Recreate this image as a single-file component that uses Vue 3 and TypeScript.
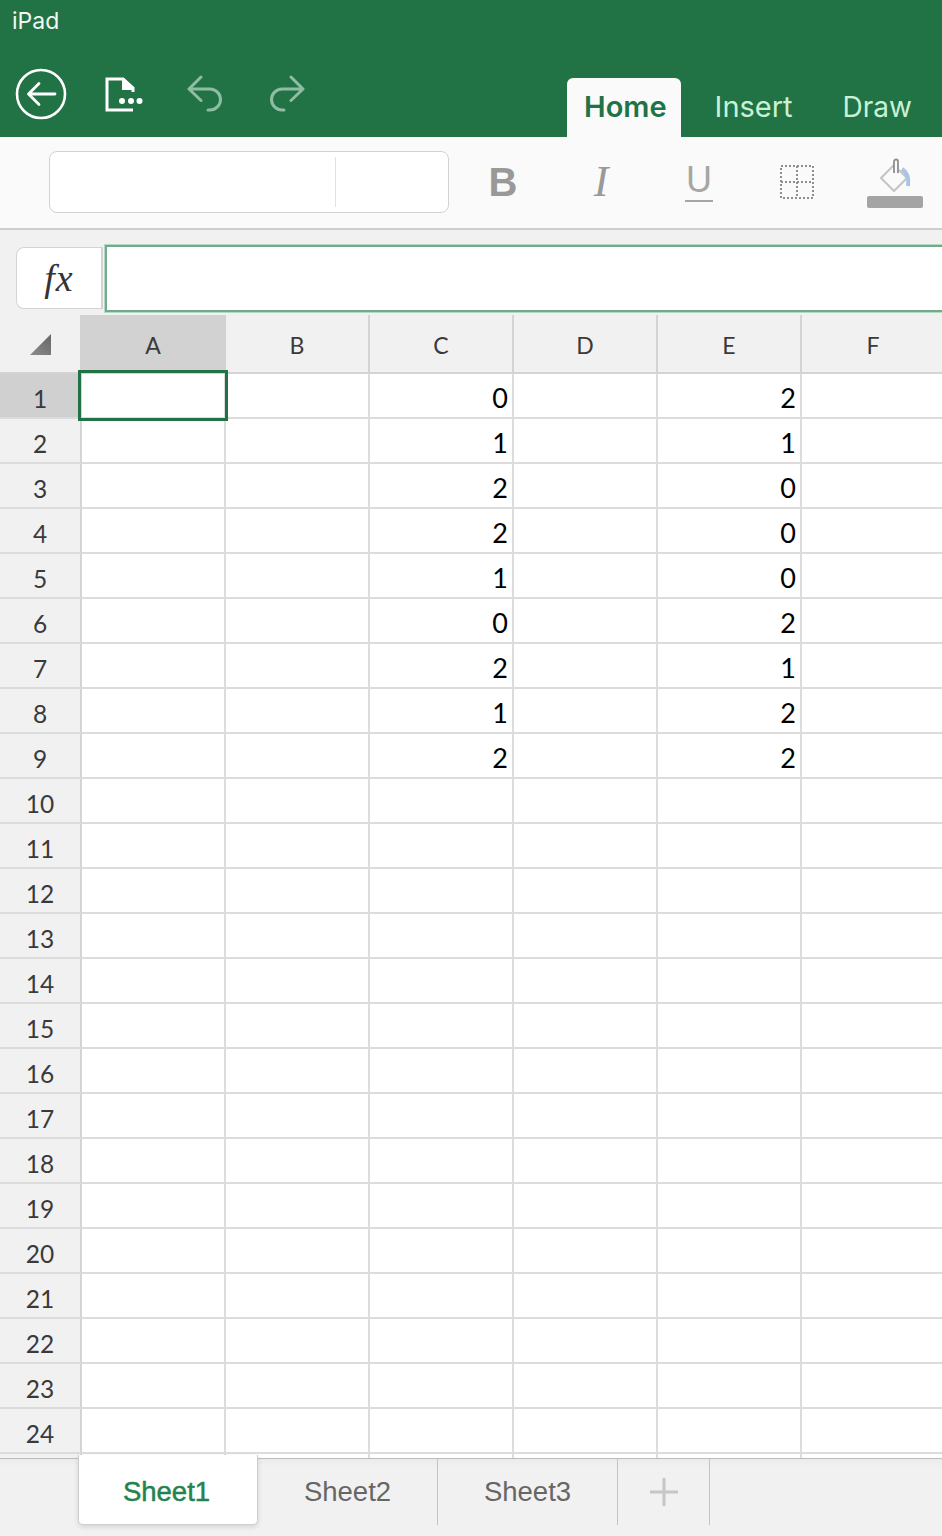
<script setup lang="ts">
const ribbonTabs = ['Home', 'Insert', 'Draw'];
const columns = ['A', 'B', 'C', 'D', 'E', 'F'];
const sheets = ['Sheet1', 'Sheet2', 'Sheet3'];

// values typed into columns C and E, top to bottom
const values: Record<string, number[]> = {
  C: [0, 1, 2, 2, 1, 0, 2, 1, 2],
  E: [2, 1, 0, 0, 0, 2, 1, 2, 2],
};

const rows = Array.from({ length: 24 }, (_, i) => i + 1);

function cellValue(col: string, row: number) {
  return values[col]?.[row - 1] ?? '';
}
</script>

<template>
  <div class="app">
    <header class="top">
      <div class="status">iPad</div>
      <div class="toolbar">
        <div class="actions">
          <svg class="icon-back" width="52" height="52" viewBox="0 0 52 52" fill="none">
            <circle cx="26" cy="26" r="24" stroke="#fff" stroke-width="2.6" />
            <path d="M40 26H14M24 15.5 13.5 26 24 36.5" stroke="#fff" stroke-width="2.8" stroke-linecap="round" stroke-linejoin="round" />
          </svg>
          <svg class="icon-file" width="40" height="36" viewBox="0 0 40 36" fill="none">
            <path d="M29 15V11L19 2H3V33H29" stroke="#fff" stroke-width="3" />
            <path d="M18 1h2l10 10v2H18z" fill="#fff" />
            <circle cx="18" cy="24" r="3" fill="#fff" />
            <circle cx="27" cy="24" r="3" fill="#fff" />
            <circle cx="35.500" cy="24" r="3" fill="#fff" />
          </svg>
          <svg class="icon-undo" width="38" height="38" viewBox="0 0 38 38" fill="none">
            <path d="M14 2 2 14l12 11.500M2 14h21a10.500 10.500 0 0 1 0 21h-2" stroke="#8fbda3" stroke-width="3" stroke-linecap="round" stroke-linejoin="round" />
          </svg>
          <svg class="icon-redo" width="38" height="38" viewBox="0 0 38 38" fill="none">
            <path d="M24 2l12 12-12 11.500M36 14H15a10.500 10.500 0 0 0 0 21h2" stroke="#8fbda3" stroke-width="3" stroke-linecap="round" stroke-linejoin="round" />
          </svg>
        </div>
        <nav class="tabs">
          <div v-for="(tab, i) in ribbonTabs" :key="tab" class="tab" :class="{ active: i === 0 }">{{ tab }}</div>
        </nav>
      </div>
    </header>

    <section class="ribbon">
      <div class="font-box">
        <div class="font-name"></div>
        <div class="font-size"></div>
      </div>
      <div class="tool bold">B</div>
      <div class="tool italic">I</div>
      <div class="tool underline"><span>U</span></div>
      <div class="tool">
        <svg width="36" height="36" viewBox="0 0 36 36" fill="none">
          <path d="M2 2H34V34H2ZM18 2V34M2 18H34" stroke="#8f8f8f" stroke-width="2" stroke-dasharray="2 2" />
        </svg>
      </div>
      <div class="tool fill">
        <svg width="34" height="36" viewBox="0 0 34 36" fill="none">
          <path d="M16 7 3 20l13 13 13-13-8-8" stroke="#c4c4c4" stroke-width="2" stroke-linejoin="round" />
          <path d="M16 15V3.500a2 2 0 0 1 4 0V15" stroke="#8e8e8e" stroke-width="1.800" />
          <path d="M24 11c5 3 7 9 6 17" stroke="#a9c5e6" stroke-width="4" />
        </svg>
        <div class="fill-bar"></div>
      </div>
    </section>

    <section class="formula">
      <div class="fx">fx</div>
      <div class="formula-input"></div>
    </section>

    <main class="sheet">
      <div class="row head">
        <div class="corner">
          <svg width="22" height="22" viewBox="0 0 22 22">
            <defs>
              <linearGradient id="cornerFill" x1="0" y1="1" x2="1" y2="0">
                <stop offset="0" stop-color="#8c8c8c" />
                <stop offset="1" stop-color="#666" />
              </linearGradient>
            </defs>
            <path d="M21 0V21H0Z" fill="url(#cornerFill)" />
          </svg>
        </div>
        <div v-for="(col, i) in columns" :key="col" class="col-head" :class="{ selected: i === 0 }">{{ col }}</div>
      </div>
      <div v-for="row in rows" :key="row" class="row">
        <div class="row-head" :class="{ selected: row === 1 }">{{ row }}</div>
        <div
          v-for="col in columns"
          :key="col"
          class="cell"
          :class="{ current: row === 1 && col === 'A' }"
        >{{ cellValue(col, row) }}</div>
      </div>
      <!-- top of the next row, the rest is under the sheet tabs -->
      <div class="row">
        <div class="row-head"></div>
        <div v-for="col in columns" :key="col" class="cell"></div>
      </div>
    </main>

    <footer class="sheets">
      <div v-for="(sheet, i) in sheets" :key="sheet" class="sheet-tab" :class="{ active: i === 0 }">{{ sheet }}</div>
      <div class="sheet-add">
        <svg width="28" height="28" viewBox="0 0 28 28" fill="none">
          <path d="M14 0V28M0 14H28" stroke="#c6c6c6" stroke-width="3" />
        </svg>
      </div>
    </footer>
  </div>
</template>

<style>
body {
  margin: 0;
}
</style>

<style scoped>
.app {
  width: 942px;
  height: 1536px;
  display: flex;
  flex-direction: column;
  overflow: hidden;
  background: #f1f1f1;
  font-family: Inter, "Liberation Sans", sans-serif;
}

.top {
  height: 137px;
  flex: none;
  display: flex;
  flex-direction: column;
  background: #217346;
  color: #fff;
}

.status {
  height: 41px;
  padding: 7px 0 0 12px;
  box-sizing: border-box;
  font-size: 23px;
  line-height: 28px;
  color: #f4f8f5;
}

.toolbar {
  flex: 1;
  display: flex;
  justify-content: space-between;
  align-items: flex-end;
}

.actions {
  display: flex;
  align-items: flex-start;
  align-self: flex-start;
  padding: 27px 0 0 15px;
}

.icon-file {
  margin: 9px 0 0 37px;
}

.icon-undo {
  margin: 7px 0 0 43px;
}

.icon-redo {
  margin: 7px 0 0 42px;
}

.tabs {
  display: flex;
  padding-right: 13px;
}

.tab {
  height: 59px;
  padding: 0 17px 0 33px;
  box-sizing: border-box;
  font-size: 29px;
  line-height: 58px;
  color: #c9f2d4;
}

.tab:nth-child(2) {
  padding: 0 17px 0 34px;
}

.tab:nth-child(3) {
  font-size: 28px;
}

.tab.active {
  padding: 0 14px 0 17px;
  background: #fafafa;
  border-radius: 6px 6px 0 0;
  color: #217346;
  font-weight: 600;
}

.ribbon {
  height: 93px;
  flex: none;
  box-sizing: border-box;
  display: flex;
  align-items: flex-start;
  padding: 14px 0 0 49px;
  background: #fafafa;
  border-bottom: 2px solid #cdcdcd;
}

.font-box {
  width: 400px;
  height: 62px;
  flex: none;
  box-sizing: border-box;
  display: flex;
  align-items: center;
  margin-right: 5px;
  background: #fff;
  border: 1px solid #d2d2d2;
  border-radius: 8px;
}

.font-name {
  width: 285px;
  height: 50px;
  border-right: 1px solid #e2e2e2;
}

.tool {
  width: 98px;
  height: 62px;
  flex: none;
  display: flex;
  align-items: center;
  justify-content: center;
  color: #999;
  line-height: 1;
}

.bold {
  font-family: "Liberation Sans", sans-serif;
  font-weight: 700;
  font-size: 40px;
}

.italic {
  font-family: "Liberation Serif", serif;
  font-style: italic;
  font-size: 44px;
}

.underline span {
  display: block;
  width: 28px;
  padding-bottom: 2px;
  border-bottom: 2px solid #a6a6a6;
  text-align: center;
  font-family: "Liberation Sans", sans-serif;
  font-size: 36px;
  color: #a6a6a6;
}

.fill {
  flex-direction: column;
  justify-content: flex-start;
  padding-top: 7px;
  box-sizing: border-box;
}

.fill svg {
  margin-right: 1px;
}

.fill-bar {
  width: 56px;
  height: 12px;
  margin-top: 2px;
  background: #a4a4a4;
  border-radius: 2px;
}

.formula {
  height: 85px;
  flex: none;
  box-sizing: border-box;
  display: flex;
  align-items: flex-start;
  padding: 15px 0 0 16px;
}

.fx {
  width: 87px;
  height: 62px;
  margin-top: 2px;
  box-sizing: border-box;
  background: #fff;
  border: 1px solid #d4d4d4;
  border-right: 2px solid #d4d4d4;
  border-radius: 8px 0 0 8px;
  text-align: center;
  font-family: "Liberation Serif", serif;
  font-style: italic;
  font-size: 38px;
  line-height: 60px;
  letter-spacing: 1px;
  color: #333;
}

.formula-input {
  flex: 1;
  height: 67px;
  margin: 0 -10px 0 2px;
  box-sizing: border-box;
  background: #fff;
  border: 2px solid #6fab8c;
  box-shadow: 0 0 0 1px #b8d8c6;
}

.sheet {
  flex: 1;
  min-height: 0;
  overflow: hidden;
  background: #fff;
  font-family: Lato, "Liberation Sans", sans-serif;
  font-size: 24.500px;
}

.row {
  display: grid;
  grid-template-columns: 82px repeat(6, 144px);
  grid-template-rows: 100%;
  height: 45px;
}

.row.head {
  height: 59px;
}

.row > * {
  box-sizing: border-box;
  min-width: 0;
  min-height: 0;
}

.corner {
  display: flex;
  align-items: flex-start;
  padding: 19px 0 0 30px;
  background: #f1f1f1;
  border-bottom: 2px solid #d4d4d4;
}

.col-head {
  background: #f1f1f1;
  border-right: 2px solid #d4d4d4;
  border-bottom: 2px solid #d4d4d4;
  text-align: center;
  font-size: 23px;
  line-height: 61px;
  color: #3a3a3a;
}

.col-head.selected {
  margin-left: -2px;
  padding-left: 2px;
  background: #d2d2d2;
  border-right-color: #d2d2d2;
}

.row-head {
  background: #f1f1f1;
  border-right: 2px solid #d4d4d4;
  border-bottom: 2px solid #dcdcdc;
  text-align: center;
  line-height: 49px;
  color: #3a3a3a;
}

.row-head.selected {
  background: #d0d0d0;
}

.cell {
  position: relative;
  padding-right: 4px;
  border-right: 2px solid #dcdcdc;
  border-bottom: 2px solid #dcdcdc;
  text-align: right;
  font-size: 27px;
  line-height: 48px;
  color: #000;
}

.cell.current {
  z-index: 1;
}

.cell.current::after {
  content: "";
  position: absolute;
  inset: -4px;
  border: 3px solid #217346;
}

.sheets {
  position: relative;
  height: 78px;
  flex: none;
  box-sizing: border-box;
  display: flex;
  padding-left: 78px;
  background: linear-gradient(#ebebeb, #f1f1f1 8px);
  border-top: 1px solid #bcbcbc;
}

.sheet-tab {
  width: 180px;
  height: 66px;
  box-sizing: border-box;
  border-right: 1px solid #c4c4c4;
  text-align: center;
  font-family: "Liberation Sans", sans-serif;
  font-size: 27.500px;
  line-height: 66px;
  color: #666;
}

.sheet-tab.active {
  position: relative;
  height: 70px;
  margin-top: -4px;
  padding: 4px 3px 0 0;
  background: #fff;
  border: 1px solid #cfcfcf;
  border-top: 0;
  border-radius: 0 0 5px 5px;
  box-shadow: 0 2px 5px rgba(0, 0, 0, 0.12);
  color: #23834f;
  -webkit-text-stroke: 0.5px #23834f;
}

.sheet-add {
  width: 92px;
  height: 66px;
  box-sizing: border-box;
  display: flex;
  align-items: center;
  justify-content: center;
  border-right: 1px solid #c4c4c4;
}
</style>
